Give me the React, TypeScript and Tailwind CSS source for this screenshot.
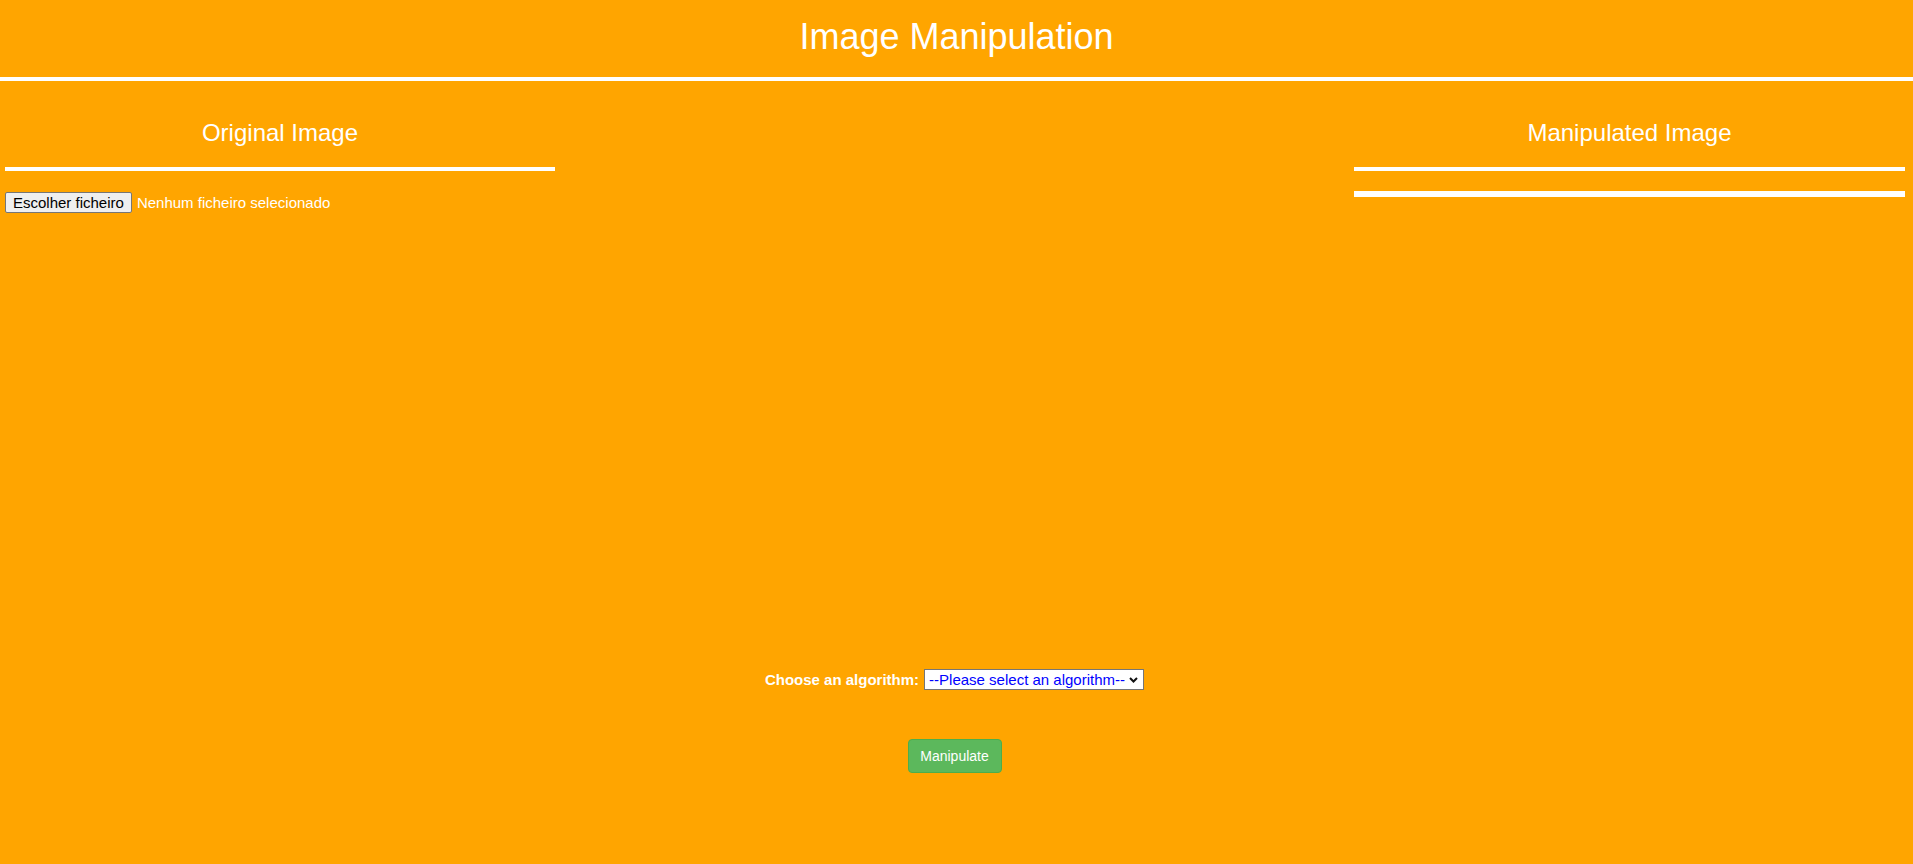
import { useState } from "react";

const algorithms = ["Grayscale", "Invert", "Blur", "Sharpen", "Edge detection"];

export default function App() {
  const [algorithm, setAlgorithm] = useState("");

  return (
    <div className="min-h-[864px] bg-[#ffa500] font-['Liberation_Sans',Arial,sans-serif] text-white">
      <header className="pt-[16px]">
        <h1 className="mb-[20px] text-center text-[36px] leading-[41px]">Image Manipulation</h1>
        <div className="h-[4px] bg-white" />
      </header>

      <main className="flex pl-[5px] pr-[8px]">
        <section className="w-[550px]">
          <h2 className="mt-[38px] text-center text-[24px] leading-[28px]">Original Image</h2>
          <div className="mt-[20px] h-[4px] bg-white" />
          <div className="mt-[21px] flex items-center text-[15px]">
            <button className="h-[21px] rounded-[2px] border border-[#767676] bg-[#efefef] px-[7px] leading-[19px] text-black">
              Escolher ficheiro
            </button>
            <span className="ml-[5px] leading-[21px]">Nenhum ficheiro selecionado</span>
          </div>
        </section>

        <section className="flex flex-1 flex-col items-center pt-[588px]">
          <div className="flex h-[21px] items-center">
            <label className="text-[15px] font-bold leading-[21px]">Choose an algorithm:</label>
            <div className="ml-[5px] flex h-[21px] w-[220px] items-center border border-[#767676] bg-white">
              <select
                value={algorithm}
                onChange={(e) => setAlgorithm(e.target.value)}
                className="h-full flex-1 appearance-none bg-transparent pl-[4px] text-[15px] leading-[19px] text-[#0000ff] outline-none"
              >
                <option value="">--Please select an algorithm--</option>
                {algorithms.map((a) => (
                  <option key={a} value={a}>
                    {a}
                  </option>
                ))}
              </select>
              <svg className="mr-[5px] h-[6px] w-[9px]" viewBox="0 0 9 6">
                <path d="M1 1l3.5 3.5L8 1" fill="none" stroke="#111" strokeWidth="2" />
              </svg>
            </div>
          </div>
          <button className="mt-[49px] h-[34px] w-[94px] rounded-[4px] border border-[#4cae4c] bg-[#5cb85c] text-[14px] text-white">
            Manipulate
          </button>
        </section>

        <section className="w-[551px]">
          <h2 className="mt-[38px] text-center text-[24px] leading-[28px]">Manipulated Image</h2>
          <div className="mt-[20px] h-[4px] bg-white" />
          <div className="mt-[20px] h-[6px] bg-white" />
        </section>
      </main>
    </div>
  );
}
